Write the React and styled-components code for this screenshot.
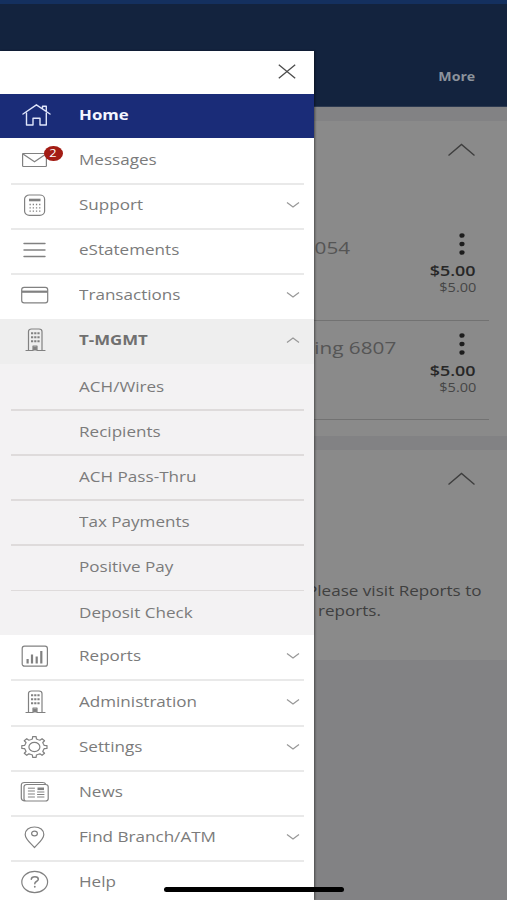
import React from "react";
import styled, { createGlobalStyle, css } from "styled-components";

const GlobalStyle = createGlobalStyle`
  * { box-sizing: border-box; }
  html, body { margin: 0; padding: 0; background: #828284; }
  body { font-family: "Open Sans", "Noto Sans", sans-serif; overflow: hidden; }
`;

const Screen = styled.div`
  position: relative;
  width: 507px;
  height: 900px;
  overflow: hidden;
  display: flex;
  flex-direction: column;
  background: #828284;
`;

/* Wide lettering used throughout the app */
const Label = styled.span`
  display: inline-block;
  white-space: nowrap;
  line-height: ${(p) => p.$line || 20}px;
  transform: scaleX(1.22);
  transform-origin: ${(p) => (p.$end ? "right" : "left")} center;
  font-size: ${(p) => p.$size || 14}px;
  font-weight: ${(p) => p.$weight || 400};
  color: ${(p) => p.$color || "inherit"};
`;

const TopBar = styled.header`
  height: 107px;
  flex: none;
  display: flex;
  justify-content: flex-end;
  padding: 63px 32px 0 0;
  background: #13233e;
  border-top: 4px solid #14305f;
  border-bottom: 1px solid #2c3950;
`;

const Card = styled.section`
  flex: none;
  height: ${(p) => p.$height}px;
  margin-top: ${(p) => p.$gap}px;
  padding-left: 314px;
  background: #8a8a8a;
`;

const CardHead = styled.div`
  height: ${(p) => p.$height}px;
  display: flex;
  justify-content: flex-end;
  padding: 22px 32px 0 0;
`;

const Account = styled.div`
  height: 99.5px;
  width: 175px;
  display: flex;
  justify-content: space-between;
  padding-right: 13px;
  border-bottom: 1px solid #727272;
`;

const AccountName = styled.div`
  width: ${(p) => p.$width}px;
  padding-top: 17px;
  display: flex;
  justify-content: flex-end;
`;

const Amounts = styled.div`
  display: flex;
  flex-direction: column;
  align-items: flex-end;
  padding-top: 12px;
`;

const Dots = styled.svg`
  width: 6px;
  height: 22px;
  margin-right: 11.5px;
  margin-bottom: 5px;
`;

const Notice = styled.div`
  display: flex;
  flex-direction: column;
  color: #3f3f3f;
`;

const NoticeLine = styled.div`
  height: 20px;
  margin-left: ${(p) => p.$shift}px;
`;

const Drawer = styled.nav`
  position: absolute;
  left: 0;
  top: 51px;
  width: 314px;
  height: 849px;
  background: #fff;
  box-shadow: 1px 0 2px rgba(0, 0, 0, 0.45);
  overflow: hidden;
`;

const DrawerHead = styled.div`
  height: 42.6px;
  display: flex;
  justify-content: flex-end;
  padding: 12.5px 18px 0 0;
`;

const Row = styled.div`
  position: relative;
  height: 45.17px;
  display: flex;
  align-items: center;
  padding: 0 14px 3px 20px;
  color: #7b7b7b;
  ${(p) =>
    !p.$plain &&
    css`
      &::after {
        content: "";
        position: absolute;
        left: 11px;
        right: 10px;
        bottom: -1px;
        height: 2px;
        background: #e9e9e9;
      }
    `}
  ${(p) =>
    p.$active &&
    css`
      height: 44.9px;
      padding-bottom: 3px;
      background: #1a2c78;
      color: #f4f6ff;
    `}
  ${(p) =>
    p.$open &&
    css`
      background: #eeeeee;
      color: #707070;
    `}
`;

const IconSlot = styled.span`
  position: relative;
  width: 32px;
  height: 28px;
  flex: none;
  margin-right: 26.5px;
  color: ${(p) => (p.$active ? "#dfe5fa" : "#818181")};
`;

const Icon = styled.svg`
  display: block;
  width: 32px;
  height: 28px;
  overflow: visible;
  fill: none;
  stroke: currentColor;
  stroke-width: 1.2;
  stroke-linejoin: round;
  stroke-linecap: round;
`;

const Badge = styled.span`
  position: absolute;
  left: 24px;
  top: 0;
  width: 18.5px;
  height: 15px;
  border-radius: 50%;
  background: #a31c14;
  color: #fff;
  font-size: 10.5px;
  line-height: 15px;
  text-align: center;
`;

const BadgeCount = styled.span`
  display: inline-block;
  transform: scaleX(1.22);
`;

const Chevron = styled.svg`
  width: 14px;
  height: 8px;
  margin-left: auto;
  fill: none;
  stroke: #989898;
  stroke-width: 1.2;
`;

const SubMenu = styled.div`
  height: 271px;
  padding-top: 0.6px;
  background: #f3f2f3;
`;

const SubRow = styled.div`
  position: relative;
  height: 45.17px;
  display: flex;
  align-items: center;
  padding: 0 0 1.2px 79px;
  color: #7b7b7b;
  &:not(:last-child)::after {
    content: "";
    position: absolute;
    left: 11px;
    right: 10px;
    bottom: -0.5px;
    height: 1.5px;
    background: #dedbdb;
  }
`;

const HomeIndicator = styled.div`
  position: absolute;
  left: 164px;
  top: 887px;
  width: 180px;
  height: 5px;
  border-radius: 3px;
  background: #000;
`;

const CloseIcon = styled.svg`
  width: 18px;
  height: 15px;
  stroke: #4c4c4c;
  stroke-width: 1.3;
`;

const Caret = styled.svg`
  width: 27px;
  height: 14px;
  fill: none;
  stroke: #3e3e3e;
  stroke-width: 1.4;
`;

const building = (
  <g transform="translate(-0.5 0)">
    <path d="M9 24V5.500Q9 3 12 3H19.500Q22.500 3 22.500 5.500V24M6.500 24.500H13.500V20H17.500V24.500H25.500" />
    <path
      d="M11.500 7.200h2.200M14.700 7.200h2.200M17.900 7.200h2.200M11.500 11.200h2.200M14.700 11.200h2.200M17.900 11.200h2.200M11.500 15.200h2.200M14.700 15.200h2.200M17.900 15.200h2.200"
      strokeWidth="2"
      strokeLinecap="butt"
    />
    <path d="M14.200 21h2.600v3h-2.600z" fill="currentColor" />
  </g>
);

const gearPath = (() => {
  const pts = [];
  const teeth = 8;
  for (let i = 0; i < teeth; i += 1) {
    [[-0.36, 0.77], [-0.2, 0.79], [-0.14, 1], [0.14, 1], [0.2, 0.79], [0.36, 0.77]].forEach(([d, r]) => {
      const a = (i * Math.PI * 2) / teeth + d;
      pts.push(`${(14.4 + Math.sin(a) * r * 12.7).toFixed(2)} ${(14 - Math.cos(a) * r * 10.4).toFixed(2)}`);
    });
  }
  return `M${pts.join("L")}Z`;
})();

const icons = {
  home: (
    <g strokeWidth="1.4">
      <path d="M3 13L16.400 3.800L30 13M22.500 7.500V5.200H26.300V10.500" />
      <path d="M6.500 12V24H13V17.300H20V24H26.300V12" />
    </g>
  ),
  mail: (
    <>
      <rect x="2.600" y="7.500" width="23.800" height="13" rx="0.800" />
      <path d="M3 8L14.500 15.800L26 8" />
    </>
  ),
  calculator: (
    <>
      <rect x="4.600" y="4" width="20" height="20.300" rx="4.800" ry="4" />
      <path d="M9 9H20.500" strokeWidth="2.600" strokeLinecap="butt" />
      <path d="M9.500 13.500H21M9.500 16.800H21M9.500 20.200H21" strokeWidth="1.300" strokeDasharray="1.300 1.900" strokeLinecap="butt" />
    </>
  ),
  lines: <path d="M4 7.500H25M4 14H25M4 20.500H25" strokeWidth="1.400" />,
  card: (
    <>
      <rect x="1.700" y="6.300" width="26" height="15.600" rx="2.400" />
      <path d="M2 10.700H27.500" strokeWidth="2.200" strokeLinecap="butt" />
    </>
  ),
  building,
  chart: (
    <>
      <rect x="2.200" y="4.200" width="25.200" height="20" rx="2.300" />
      <path d="M7.600 21.500V17M12 21.500V12.500M16.700 21.500V14.500M21.300 21.500V9" strokeWidth="2.200" strokeLinecap="butt" />
    </>
  ),
  gear: (
    <>
      <path d={gearPath} />
      <ellipse cx="14.400" cy="14" rx="5.500" ry="4.600" />
    </>
  ),
  news: (
    <>
      <path d="M4.200 22.800Q1.300 22.500 1.300 19.800V7.500Q1.300 4.500 4.500 4.500H22.500Q25.200 4.500 25.500 6.400" />
      <path d="M4 21V8.800Q4 6.500 6.800 6.500H25.500Q28.200 6.500 28.200 8.800V20.800Q28.200 23 25.500 23H6Q4 23 4 21Z" />
      <path d="M8.300 10.200H14.500M8.300 13H14.500M8.300 16H14.500M8.300 19H14.500M17.500 14H24M17.500 16.500H24M17.500 19H24" strokeWidth="1" />
      <path d="M17.500 10.800H24" strokeWidth="2.600" strokeLinecap="butt" />
    </>
  ),
  pin: (
    <>
      <path d="M14.500 24.500C11.500 21 5.200 16.500 5.200 11.500C5.200 7 9 4 14.500 4S23.800 7 23.800 11.500C23.800 16.500 17.500 21 14.500 24.500Z" />
      <ellipse cx="14.500" cy="10.500" rx="2.900" ry="2.400" />
    </>
  ),
  help: (
    <>
      <ellipse cx="14.700" cy="14" rx="12.900" ry="10.600" />
      <path d="M11.300 11.200Q11.500 8.800 14.900 8.800Q18.300 8.800 18.300 11.200Q18.300 12.500 16.400 13.500Q14.800 14.300 14.800 15.800" strokeWidth="1.500" />
      <path d="M14.800 18.700V18.800" strokeWidth="1.800" />
    </>
  ),
};

function MenuRow({ icon, label, active, open, arrow, badge, plain }) {
  return (
    <Row $active={active} $open={open} $plain={active || open || plain}>
      <IconSlot $active={active}>
        <Icon viewBox="0 0 32 28">{icons[icon]}</Icon>
        {badge && <Badge><BadgeCount>{badge}</BadgeCount></Badge>}
      </IconSlot>
      <Label $size={active || open ? 13.8 : 14} $weight={active || open ? 700 : 400}>{label}</Label>
      {arrow && (
        <Chevron viewBox="0 0 14 8">
          <path d={open ? "M1 6.500L7 2L13 6.500" : "M1 1.500L7 6L13 1.500"} />
        </Chevron>
      )}
    </Row>
  );
}

function AccountRow({ name, width }) {
  return (
    <Account>
      <AccountName $width={width}>
        <Label $end $size={17} $color="#555555">{name}</Label>
      </AccountName>
      <Amounts>
        <Dots viewBox="0 0 6 22">
          {[2.5, 11, 19.5].map((y) => (
            <ellipse key={y} cx="3" cy={y} rx="2.600" ry="2.300" fill="#1d1d1d" />
          ))}
        </Dots>
        <Label $end $size={14.7} $weight={600} $color="#272727">$5.00</Label>
        <Label $end $size={11.9} $line={14} $color="#454545">$5.00</Label>
      </Amounts>
    </Account>
  );
}

const CollapseCaret = () => (
  <Caret viewBox="0 0 27 14">
    <path d="M0.500 12.500L13.500 1.500L26.500 12.500" />
  </Caret>
);

const subItems = ["ACH/Wires", "Recipients", "ACH Pass-Thru", "Tax Payments", "Positive Pay", "Deposit Check"];

export default function App() {
  return (
    <>
      <GlobalStyle />
      <Screen>
        <TopBar>
          <Label $end $size={11.6} $weight={700} $color="#8c939c">More</Label>
        </TopBar>
        <Card $height={315} $gap={14}>
          <CardHead $height={100}><CollapseCaret /></CardHead>
          <AccountRow name="054" width={36} />
          <AccountRow name="ing 6807" width={82} />
        </Card>
        <Card $height={210} $gap={14}>
          <CardHead $height={129}><CollapseCaret /></CardHead>
          <Notice>
            <NoticeLine $shift={-7.5}><Label>Please visit Reports to</Label></NoticeLine>
            <NoticeLine $shift={4}><Label>reports.</Label></NoticeLine>
          </Notice>
        </Card>
        <Drawer>
          <DrawerHead>
            <CloseIcon viewBox="0 0 18 15">
              <path d="M0.800 0.800L17.200 14.200M17.200 0.800L0.800 14.200" />
            </CloseIcon>
          </DrawerHead>
          <MenuRow icon="home" label="Home" active />
          <MenuRow icon="mail" label="Messages" badge="2" />
          <MenuRow icon="calculator" label="Support" arrow />
          <MenuRow icon="lines" label="eStatements" />
          <MenuRow icon="card" label="Transactions" arrow plain />
          <MenuRow icon="building" label="T-MGMT" arrow open />
          <SubMenu>
            {subItems.map((item) => (
              <SubRow key={item}><Label>{item}</Label></SubRow>
            ))}
          </SubMenu>
          <MenuRow icon="chart" label="Reports" arrow />
          <MenuRow icon="building" label="Administration" arrow />
          <MenuRow icon="gear" label="Settings" arrow />
          <MenuRow icon="news" label="News" />
          <MenuRow icon="pin" label="Find Branch/ATM" arrow />
          <MenuRow icon="help" label="Help" plain />
        </Drawer>
        <HomeIndicator />
      </Screen>
    </>
  );
}
